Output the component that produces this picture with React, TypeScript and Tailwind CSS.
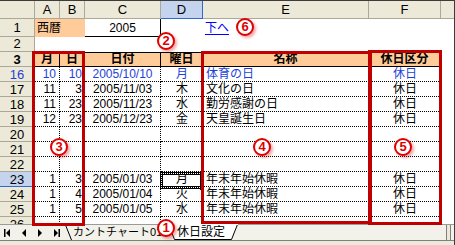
import React from 'react';

type Row = {
  n: number;
  m?: string;
  d?: string;
  date?: string;
  w?: string;
  name?: string;
  k?: string;
  blue?: boolean;
};

const rows: Row[] = [
  { n: 16, m: '10', d: '10', date: '2005/10/10', w: '月', name: '体育の日', k: '休日', blue: true },
  { n: 17, m: '11', d: '3', date: '2005/11/03', w: '木', name: '文化の日', k: '休日' },
  { n: 18, m: '11', d: '23', date: '2005/11/23', w: '水', name: '勤労感謝の日', k: '休日' },
  { n: 19, m: '12', d: '23', date: '2005/12/23', w: '金', name: '天皇誕生日', k: '休日' },
  { n: 20 },
  { n: 21 },
  { n: 22 },
  { n: 23, m: '1', d: '3', date: '2005/01/03', w: '月', name: '年末年始休暇', k: '休日' },
  { n: 24, m: '1', d: '4', date: '2005/01/04', w: '火', name: '年末年始休暇', k: '休日' },
  { n: 25, m: '1', d: '5', date: '2005/01/05', w: '水', name: '年末年始休暇', k: '休日' },
  { n: 26 },
];

const RowHead = ({ label, active }: { label: number; active?: boolean }) => (
  <div
    className={
      active
        ? 'w-[35px] shrink-0 flex items-center justify-center bg-[#C4D3EE] border-r border-r-[#ACA899] border-b border-b-[#3169C6] text-[13px]'
        : 'w-[35px] shrink-0 flex items-center justify-center bg-[#ECE9D8] border-r border-b border-[#ACA899] text-[13px]'
    }
  >
    {label}
  </div>
);

const Circle = ({ n, className }: { n: number; className: string }) => (
  <div
    className={`absolute w-[18px] h-[18px] rounded-full border-2 border-[#E00000] bg-white text-[#E00000] font-bold text-[13px] leading-[14px] flex items-center justify-center shadow-[2px_2px_3px_rgba(200,0,0,0.35)] ${className}`}
  >
    {n}
  </div>
);

const DataRow = ({ r }: { r: Row }) => {
  const color = r.blue ? 'text-[#1E3FD8]' : 'text-black';
  return (
    <div className={`flex h-[15px] shrink-0 leading-[15px] text-[12px] ${color}`}>
      <RowHead label={r.n} active={r.n === 23} />
      <div className="w-[25px] shrink-0 border-r border-b border-dotted border-black text-right pr-[3px]">{r.m}</div>
      <div className="w-[25px] shrink-0 border-b border-dotted border-black text-right pr-[3px]">{r.d}</div>
      <div className="w-[76px] shrink-0 border-r border-b border-dotted border-black text-center">{r.date}</div>
      <div className="w-[42px] shrink-0 border-b border-dotted border-black text-center">{r.w}</div>
      <div className="w-[166px] shrink-0 border-b border-dotted border-black pl-[3px]">{r.name}</div>
      <div className="w-[72px] shrink-0 border-b border-dotted border-black text-center">{r.k}</div>
      <div className="w-[13px] shrink-0" />
    </div>
  );
};

export default function App() {
  return (
    <div className="relative w-[455px] h-[245px] overflow-hidden bg-white border-t border-r border-[#3C3C3C] font-['Liberation_Sans','Noto_Sans_CJK_JP',sans-serif] text-black">
      {/* column headers */}
      <div className="flex h-[18px] text-[13px] leading-[17px]">
        <div className="w-[35px] shrink-0 bg-[#ECE9D8] border-r border-b border-[#ACA899]" />
        <div className="w-[25px] shrink-0 bg-[#ECE9D8] border-r border-b border-[#ACA899] text-center">A</div>
        <div className="w-[25px] shrink-0 bg-[#ECE9D8] border-r border-b border-[#ACA899] text-center">B</div>
        <div className="w-[76px] shrink-0 bg-[#ECE9D8] border-r border-b border-[#ACA899] text-center">C</div>
        <div className="w-[42px] shrink-0 bg-[#C4D3EE] border-r border-b border-[#3169C6] text-center">D</div>
        <div className="w-[166px] shrink-0 bg-[#ECE9D8] border-r border-b border-[#ACA899] text-center">E</div>
        <div className="w-[72px] shrink-0 bg-[#ECE9D8] border-r border-b border-[#ACA899] text-center">F</div>
        <div className="w-[13px] shrink-0 bg-[#ECE9D8] border-b border-[#ACA899]" />
      </div>

      {/* sheet body */}
      <div className="flex flex-col h-[205px] overflow-hidden">
        <div className="flex h-[18px] shrink-0 text-[12px] leading-[18px]">
          <RowHead label={1} />
          <div className="w-[50px] shrink-0 bg-[#FFCC99] pl-[2px]">西暦</div>
          <div className="w-[76px] shrink-0 border-r border-b border-black text-center">2005</div>
          <div className="w-[42px] shrink-0" />
          <div className="w-[166px] shrink-0 pl-[2px]">
            <span className="text-[#0000FF] underline underline-offset-2">下へ</span>
          </div>
        </div>
        <div className="flex h-[15px] shrink-0">
          <RowHead label={2} />
        </div>
        <div className="flex h-[15px] shrink-0 text-[12px] leading-[13px] font-bold">
          <RowHead label={3} />
          <div className="w-[25px] shrink-0 bg-[#FFCC99] border-y border-r border-black text-center">月</div>
          <div className="w-[25px] shrink-0 bg-[#FFCC99] border-y border-r border-black text-center">日</div>
          <div className="w-[76px] shrink-0 bg-[#FFCC99] border-y border-r border-black text-center">日付</div>
          <div className="w-[42px] shrink-0 bg-[#FFCC99] border-y border-r border-black text-center">曜日</div>
          <div className="w-[166px] shrink-0 bg-[#FFCC99] border-y border-r border-black text-center">名称</div>
          <div className="w-[72px] shrink-0 bg-[#FFCC99] border-y border-r border-black text-center">休日区分</div>
        </div>
        {rows.map((r) => (
          <DataRow key={r.n} r={r} />
        ))}
      </div>

      {/* sheet tabs */}
      <div className="relative flex h-[16px] bg-[#F2F1EA] border-t border-[#9A9A9A] text-[11px] leading-[15px]">
        <svg width="73" height="15" className="shrink-0">
          <rect x="4" y="4" width="1.5" height="8" fill="black" />
          <polygon points="10,4 10,12 6,8" fill="black" />
          <polygon points="26,4 26,12 22,8" fill="black" />
          <polygon points="38,4 38,12 42,8" fill="black" />
          <polygon points="54,4 54,12 58,8" fill="black" />
          <rect x="58.5" y="4" width="1.5" height="8" fill="black" />
          <line x1="65.5" y1="0" x2="71.5" y2="15" stroke="black" />
        </svg>
        <div className="whitespace-nowrap">カントチャート01</div>
        <div className="absolute left-[168px] top-[-1px] w-[70px] h-[16px] text-[12px]">
          <svg width="70" height="16" className="absolute inset-0">
            <polygon points="0.5,0.5 69.5,0.5 63.5,15.5 6.5,15.5" fill="white" stroke="black" />
            <line x1="0" y1="0.5" x2="70" y2="0.5" stroke="white" />
          </svg>
          <div className="relative pl-[9px] leading-[16px]">休日設定</div>
        </div>
        <div className="ml-auto mr-[3px] w-[5px] h-full bg-[#ECE9D8] border-x border-[#808080]" />
      </div>
      <div className="h-[5px] bg-[#ECE9D8] border-t border-[#808080]" />

      {/* active cell D23 */}
      <div className="absolute left-[160px] top-[171px] w-[43px] h-[17px] border-[3px] border-black">
        <div className="absolute inset-[-2px] border border-dotted border-white" />
        <div className="absolute right-[-4px] bottom-[-4px] w-[4px] h-[4px] bg-black" />
      </div>

      {/* annotation boxes */}
      <div className="absolute left-[32px] top-[50px] w-[53px] h-[175px] border-[3px] border-[#C00000]" />
      <div className="absolute left-[201px] top-[50px] w-[171px] h-[173px] border-[3px] border-[#C00000]" />
      <div className="absolute left-[368px] top-[49px] w-[74px] h-[175px] border-[3px] border-[#C00000]" />

      <Circle n={1} className="left-[157px] top-[218px]" />
      <Circle n={2} className="left-[157px] top-[31px]" />
      <Circle n={3} className="left-[50px] top-[137px]" />
      <Circle n={4} className="left-[253px] top-[137px]" />
      <Circle n={5} className="left-[394px] top-[137px]" />
      <Circle n={6} className="left-[236px] top-[17px]" />
    </div>
  );
}
